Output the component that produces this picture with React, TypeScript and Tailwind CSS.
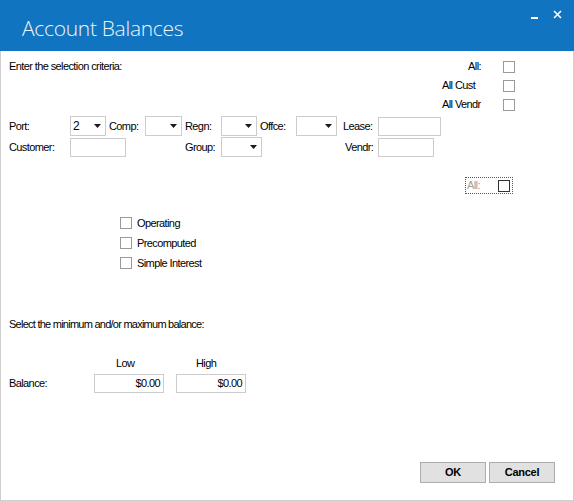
import React from "react";

const font = { fontFamily: '"Liberation Sans", Arial, sans-serif' };

function Check({ dark = false }: { dark?: boolean }) {
  return (
    <span
      className={`block w-[12px] h-[12px] shrink-0 bg-white border ${
        dark ? "border-[#333333]" : "border-[#9a9a9a]"
      }`}
    />
  );
}

function Combo({ w, value = "" }: { w: string; value?: string }) {
  return (
    <div
      className={`${w} h-[20px] shrink-0 flex items-center justify-between bg-white border border-[#cccccc] pl-[2px] pr-[4px]`}
    >
      <span className="text-[12px] leading-none">{value}</span>
      <svg width="7" height="4" viewBox="0 0 7 4">
        <path d="M0 0H7L3.5 4Z" fill="#1a1a1a" />
      </svg>
    </div>
  );
}

function TextBox({ w, value = "", right = false }: { w: string; value?: string; right?: boolean }) {
  return (
    <div
      className={`${w} h-[19px] shrink-0 bg-white border border-[#cccccc] flex items-center px-[3px] ${
        right ? "justify-end" : ""
      }`}
    >
      {value}
    </div>
  );
}

function Label({ w, ml = "", children }: { w: string; ml?: string; children: React.ReactNode }) {
  return <span className={`${w} ${ml} shrink-0 whitespace-nowrap`}>{children}</span>;
}

export default function App() {
  return (
    <div
      className="w-[574px] h-[501px] flex flex-col bg-white text-[11px] tracking-[-0.6px] text-black leading-[13px]"
      style={font}
    >
      {/* title bar */}
      <div className="h-[51px] shrink-0 bg-[#1174c0] flex items-start justify-between">
        <div
          className="pl-[22px] pt-[14px] text-[21px] leading-[28px] font-light text-[#eef4fb] tracking-[-0.3px]"
          style={{ fontFamily: '"Open Sans", "Noto Sans", sans-serif' }}
        >
          Account Balances
        </div>
        <div className="flex items-start pt-[10px] pr-[12px] gap-[15px]">
          <span className="block w-[7px] h-[2px] bg-white mt-[7px]" />
          <svg width="9" height="9" viewBox="0 0 9 9">
            <path d="M1 1L8 8M8 1L1 8" stroke="white" strokeWidth="1.6" />
          </svg>
        </div>
      </div>

      {/* body */}
      <div className="flex-1 flex flex-col border-l border-r border-b border-[#cfcfcf] pl-[8px]">
        <div className="mt-[6px] flex">
          <div className="w-[433px] shrink-0 h-[19px] flex items-center">Enter the selection criteria:</div>
          <div className="flex flex-col">
            <div className="h-[19px] flex items-center">
              <Label w="w-[39px] text-right">All:</Label>
              <span className="ml-[22px]">
                <Check />
              </span>
            </div>
            <div className="h-[19px] flex items-center">
              <Label w="w-[39px]">All Cust</Label>
              <span className="ml-[22px]">
                <Check />
              </span>
            </div>
            <div className="h-[19px] flex items-center">
              <Label w="w-[39px]">All Vendr</Label>
              <span className="ml-[22px]">
                <Check />
              </span>
            </div>
          </div>
        </div>

        {/* row 1 */}
        <div className="mt-[2px] h-[20px] flex items-center">
          <Label w="w-[61px]">Port:</Label>
          <Combo w="w-[36px]" value="2" />
          <Label ml="ml-[3px]" w="w-[36px]">Comp:</Label>
          <Combo w="w-[37px]" />
          <Label ml="ml-[3px]" w="w-[36px]">Regn:</Label>
          <Combo w="w-[36px]" />
          <Label ml="ml-[3px]" w="w-[36px]">Offce:</Label>
          <Combo w="w-[41px]" />
          <Label ml="ml-[6px]" w="w-[35px]">Lease:</Label>
          <TextBox w="w-[63px]" />
        </div>

        {/* row 2 */}
        <div className="mt-[1px] h-[20px] flex items-center">
          <Label w="w-[61px]">Customer:</Label>
          <TextBox w="w-[56px]" />
          <Label ml="ml-[59px]" w="w-[36px]">Group:</Label>
          <Combo w="w-[41px]" />
          <Label ml="ml-[83px]" w="w-[33px]">Vendr:</Label>
          <TextBox w="w-[56px]" />
        </div>

        <div className="mt-[20px] ml-[456px] w-[48px] h-[17px] border border-dotted border-[#555555] flex items-center pl-[1px] pr-[2px]">
          <span className="text-[#a0a0a0]">All:</span>
          <span className="ml-auto">
            <Check dark />
          </span>
        </div>

        <div className="mt-[19px] ml-[111px] flex flex-col">
          {["Operating", "Precomputed", "Simple Interest"].map((t) => (
            <div key={t} className="h-[20px] flex items-center gap-[5px]">
              <Check />
              <span>{t}</span>
            </div>
          ))}
        </div>

        <div className="mt-[45px] h-[13px] tracking-[-0.75px]">Select the minimum and/or maximum balance:</div>

        <div className="mt-[26px] h-[13px] flex">
          <Label ml="ml-[107px]" w="w-[80px]">Low</Label>
          <span>High</span>
        </div>

        <div className="mt-[4px] h-[18px] flex items-center">
          <Label w="w-[85px]">Balance:</Label>
          <TextBox w="w-[70px]" value="$0.00" right />
          <span className="ml-[12px]">
            <TextBox w="w-[70px]" value="$0.00" right />
          </span>
        </div>

        <div className="mt-auto mb-[17px] mr-[18px] flex justify-end gap-[3px]">
          <button className="w-[66px] h-[21px] bg-[#e1e1e1] border border-[#adadad] font-bold tracking-[-0.3px]">
            OK
          </button>
          <button className="w-[66px] h-[21px] bg-[#e1e1e1] border border-[#adadad] font-bold tracking-[-0.3px]">
            Cancel
          </button>
        </div>
      </div>
    </div>
  );
}
